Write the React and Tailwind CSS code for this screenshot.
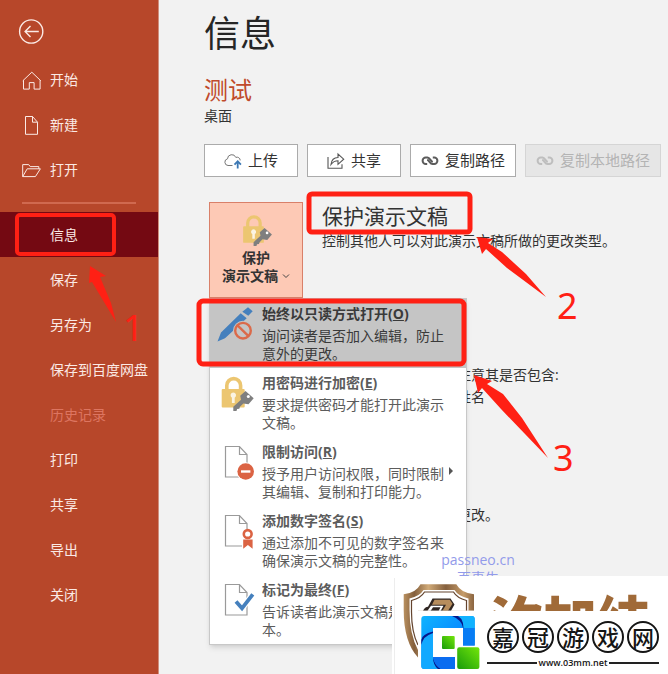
import React from 'react';
import clsx from 'clsx';

const topNav = [
  { label: '开始', icon: HomeIcon },
  { label: '新建', icon: NewIcon },
  { label: '打开', icon: OpenIcon },
];

const fileNav = [
  { label: '信息', active: true },
  { label: '保存' },
  { label: '另存为' },
  { label: '保存到百度网盘' },
  { label: '历史记录', disabled: true },
  { label: '打印' },
  { label: '共享' },
  { label: '导出' },
  { label: '关闭' },
];

const menuItems = [
  {
    title: '始终以只读方式打开',
    hotkey: 'O',
    lines: ['询问读者是否加入编辑，防止', '意外的更改。'],
    icon: ReadOnlyIcon,
    active: true,
  },
  {
    title: '用密码进行加密',
    hotkey: 'E',
    lines: ['要求提供密码才能打开此演示', '文稿。'],
    icon: LockIcon,
  },
  {
    title: '限制访问',
    hotkey: 'R',
    lines: ['授予用户访问权限，同时限制', '其编辑、复制和打印能力。'],
    icon: RestrictIcon,
    submenu: true,
  },
  {
    title: '添加数字签名',
    hotkey: 'S',
    lines: ['通过添加不可见的数字签名来', '确保演示文稿的完整性。'],
    icon: SignatureIcon,
  },
  {
    title: '标记为最终',
    hotkey: 'F',
    lines: ['告诉读者此演示文稿是最终版', '本。'],
    icon: FinalIcon,
  },
];

function HomeIcon() {
  return (
    <svg className="h-5 w-5" viewBox="0 0 20 20" fill="none" stroke="currentColor">
      <path d="M.8 10.8 9.8 2.2l9 8.6M1.5 10.2v8.9H7.3v-6.5h4.8v6.5h6V10.2" />
    </svg>
  );
}

function NewIcon() {
  return (
    <svg className="h-5 w-5" viewBox="0 0 20 20" fill="none" stroke="currentColor">
      <path d="M3.5 1.5h7l5 5.7v12.1h-12zM10.5 1.5v5.7h5" />
    </svg>
  );
}

function OpenIcon() {
  return (
    <svg className="h-5 w-5" viewBox="0 0 20 20" fill="none" stroke="currentColor">
      <path d="M.7 16.6V4.6h6l1.5 2h8.6v2.2M.7 16.6 5.2 8.8h13.2l-5 7.8z" />
    </svg>
  );
}

function CloudUpIcon() {
  return (
    <svg className="h-[18px] w-[18px]" viewBox="0 0 18 18" fill="none">
      <path d="M8.5 13.5H4a3.4 3.4 0 0 1-.5-6.7A4.3 4.3 0 0 1 11.8 5.4a3.2 3.2 0 0 1 4.4 3" stroke="#777" />
      <path d="M13.7 16.5V9.5M10.5 12.6l3.2-3.4 3.2 3.4" stroke="#3c78b4" strokeWidth="1.8" />
    </svg>
  );
}

function ShareIcon() {
  return (
    <svg className="h-[18px] w-[18px]" viewBox="0 0 18 18" fill="none" stroke="#555" strokeWidth="1.1">
      <path d="M1 5v11.3h14v-4" />
      <path d="M4 12.5c.5-4.500 3-7 7-7V2l5.700 5.200L11 12.300V8.800c-3 0-5 1-7 3.700z" />
    </svg>
  );
}

function ChainIcon() {
  return (
    <svg
      className="h-[18px] w-[18px]"
      viewBox="0 0 18 18"
      fill="none"
      stroke="currentColor"
      strokeOpacity=".8"
      strokeWidth="2"
    >
      <path d="M6.200 12H4.800a3.200 3.200 0 0 1 0-6.400h1.700c2.600 0 3 3.600 5.300 4.300" />
      <path d="M11.800 5.600h1.400a3.200 3.200 0 0 1 0 6.400h-1.700c-2.600 0-3-3.600-5.300-4.300" />
    </svg>
  );
}

function ReadOnlyIcon() {
  return (
    <svg className="h-[42px] w-10" viewBox="0 0 40 42">
      <path d="M1.5 40.5 5 31.5 24.7 12.3l6 5L9 37.3zM26.3 10.7 32 6.3l4.7 3.9-4.4 4.5z" fill="#4580bd" />
      <circle cx="27" cy="29.7" r="10" fill="#c5c5c5" />
      <circle cx="27" cy="29.7" r="7.8" fill="none" stroke="#db6a4a" strokeWidth="2.4" />
      <path d="m21.5 24.3 11 10.8" stroke="#db6a4a" strokeWidth="2.4" />
    </svg>
  );
}

function LockIcon({ className = 'h-[42px] w-10' }) {
  return (
    <svg className={className} viewBox="0 0 40 42">
      <path d="M10.8 20v-4.500a6.900 6.900 0 0 1 13.800 0V20" fill="none" stroke="#ecc671" strokeWidth="3.6" />
      <rect x="5.7" y="19" width="23" height="18.5" rx="1" fill="#ecc671" />
      <path d="M17.3 22.500a2.800 2.800 0 0 1 1.400 5.200V33h-2.800v-5.300a2.800 2.800 0 0 1 1.400-5.200z" fill="#fff" fillOpacity=".8" />
      <path d="m29.5 21 8.200 7.300-5.200 6-5.200-.8-3.300 3.300-.7 2-2.200.3-.6 1.800h-3.200v-4.200l7.700-7-.8-4z" fill="#7f7f7f" />
      <circle cx="32.3" cy="26.5" r="1.5" fill="#fff" />
    </svg>
  );
}

function PageOutline() {
  return (
    <path d="M9.5 7.5h14l7.5 8V38H9.500zM23.500 7.500v8H31" fill="#fff" stroke="#9a9a9a" strokeWidth="1.2" />
  );
}

function RestrictIcon() {
  return (
    <svg className="h-[42px] w-10" viewBox="0 0 40 42">
      <PageOutline />
      <circle cx="29.7" cy="32.5" r="9.3" fill="#fff" />
      <circle cx="29.7" cy="32.5" r="8.3" fill="#db6343" />
      <path d="M25 32.5h9.400" stroke="#fff" strokeWidth="2.4" />
    </svg>
  );
}

function SignatureIcon() {
  return (
    <svg className="h-[42px] w-10" viewBox="0 0 40 42">
      <PageOutline />
      <path d="M26 21h12v20H26z" fill="#fff" />
      <circle cx="31.7" cy="26" r="3.9" fill="none" stroke="#db6343" strokeWidth="2.6" />
      <path d="M27.2 31.500h9.400v9.200L31.900 37l-4.700 3.700z" fill="#db6343" />
    </svg>
  );
}

function FinalIcon() {
  return (
    <svg className="h-[42px] w-10" viewBox="0 0 40 42">
      <PageOutline />
      <path d="m20 24.5 6 6.800 10.800-14" fill="none" stroke="#fff" strokeWidth="6" />
      <path d="m20 24.5 6 6.800 10.800-14" fill="none" stroke="#4580bd" strokeWidth="3.8" />
    </svg>
  );
}

function Sidebar() {
  return (
    <aside className="w-[159px] shrink-0 border-r border-[#cf8f7d] bg-[#b7472a] pt-[19px] text-sm text-[#fbeae5]">
      <button type="button" aria-label="返回" className="ml-[18px] block h-[25px] w-[26px]">
        <svg className="h-[25px] w-[26px]" viewBox="0 0 26 25" fill="none" stroke="currentColor" strokeWidth="1.4">
          <circle cx="13.2" cy="12.5" r="11.6" />
          <path d="M20.8 12.5H7.300M12.500 7l-5.400 5.500 5.400 5.500" />
        </svg>
      </button>
      <nav className="mt-[13px]">
        {topNav.map(({ label, icon: Icon }) => (
          <button key={label} type="button" className="flex h-[45px] w-full items-center gap-2 pl-[22px]">
            <Icon />
            <span>{label}</span>
          </button>
        ))}
        <hr className="mx-[22px] mt-2.5 mb-2 border-t-2 border-[#d0694f]" />
        {fileNav.map((item) => (
          <button
            key={item.label}
            type="button"
            disabled={item.disabled}
            className={clsx(
              'flex h-[45px] w-full items-center pl-[50px] whitespace-nowrap',
              item.active && 'bg-[#740912]',
              item.disabled && 'text-[#dd7560]'
            )}
          >
            {item.label}
          </button>
        ))}
      </nav>
    </aside>
  );
}

function ActionButton({ icon: Icon, children, className, disabled }) {
  return (
    <button
      type="button"
      disabled={disabled}
      className={clsx(
        'flex h-[33px] shrink-0 items-center gap-1.5 border text-[15px] whitespace-nowrap',
        disabled ? 'border-[#d5d5d5] bg-[#e6e6e6] text-[#b4b4b4]' : 'border-[#ababab] bg-white text-[#333]',
        className
      )}
    >
      <Icon />
      {children}
    </button>
  );
}

function ProtectMenu() {
  return (
    <div role="menu" className="absolute top-full left-0 z-10 w-[258px] border border-[#c8c8c8] bg-white shadow-md">
      {menuItems.map(({ title, hotkey, lines, icon: Icon, active, submenu }) => (
        <button
          key={hotkey}
          type="button"
          role="menuitem"
          className={clsx(
            'relative flex h-[69px] w-full items-start gap-1.5 pl-1.5 text-left',
            active ? 'bg-[#c5c5c5] text-[#3a3a3a]' : 'text-[#5c5c5c]'
          )}
        >
          <span className="shrink-0 pt-0.5">
            <Icon />
          </span>
          <span className="block pt-[5px] text-sm whitespace-nowrap">
            <span className="block leading-5 font-bold">
              {title}(<u>{hotkey}</u>)
            </span>
            <span className="mt-[3px] block leading-[18px]">
              {lines[0]}
              <br />
              {lines[1]}
            </span>
          </span>
          {submenu && (
            <svg className="absolute top-[30px] right-[13px] h-2 w-1" viewBox="0 0 4 8">
              <path d="M0 0l4 4-4 4z" fill="#555" />
            </svg>
          )}
        </button>
      ))}
    </div>
  );
}

// Red boxes, arrows and step numbers drawn over the page
function Annotations() {
  return (
    <svg
      className="pointer-events-none absolute top-0 left-0 z-20 h-[674px] w-[668px]"
      viewBox="0 0 668 674"
      fill="#ff2014"
    >
      <g fill="none" stroke="#ff2014">
        <rect x="17" y="215" width="97" height="39" rx="3" strokeWidth="4" />
        <rect x="309" y="194" width="161" height="38" rx="3" strokeWidth="5" />
        <rect x="199" y="301" width="265" height="63" rx="4" strokeWidth="5" />
      </g>
      <path d="M90 266l16 10-6 1 11 26 5 19-24-40-3 1z" />
      <path d="M477 237l16 2-5 4 14 9 24 22 20 23-39-29-21-19-4 5z" />
      <path d="M474 375l18 6-5 3 16 10 19 24 26 40-47-49-19-21-4 5z" />
      <g className="font-['Noto_Sans']" fontSize="36">
        <text x="123" y="341">1</text>
        <text x="557" y="319">2</text>
        <text x="553" y="471">3</text>
      </g>
    </svg>
  );
}

function Watermark() {
  return (
    <div className="absolute top-[576px] right-0 z-30 h-[98px] w-[276px] bg-white text-[#151515]">
      <svg className="absolute inset-0 h-[98px] w-[276px]" viewBox="0 0 276 98">
        <defs>
          <linearGradient id="bronze" x1="0" x2="1">
            <stop offset="0" stopColor="#b9905f" />
            <stop offset=".15" stopColor="#845f3c" />
            <stop offset=".35" stopColor="#d0aa78" />
            <stop offset=".6" stopColor="#85603e" />
            <stop offset=".85" stopColor="#c69c69" />
            <stop offset="1" stopColor="#8b6541" />
          </linearGradient>
          <linearGradient id="blue" x1="0" y1="0" x2="1" y2="1">
            <stop offset="0" stopColor="#10b4ff" />
            <stop offset=".5" stopColor="#078cff" />
            <stop offset="1" stopColor="#0754d8" />
          </linearGradient>
          <linearGradient id="green" x1="0" y1="1" x2="1" y2="0">
            <stop offset="0" stopColor="#189b0c" />
            <stop offset="1" stopColor="#73e60a" />
          </linearGradient>
        </defs>
        <path d="M2.5 2v96" stroke="#ededed" />
        <path
          d="M11.7 18.3Q24 17 28.500 8.300H64.300Q69 17 82 18.300V34.700H26V81.500Q11.700 66 11.700 34z"
          fill="url(#bronze)"
        />
        <path d="M17.5 22.500Q28 20 31.500 14H62.500Q66 20 76.500 22.500V34.700H26V74Q17.500 58 17.500 34z" fill="#fff" />
        <path
          d="M26 69Q19.5 56 19.500 36V24.500Q29 22 32.500 16H61.500Q65 22 74.500 24.500V34.700"
          fill="none"
          stroke="#64442e"
          strokeWidth="1.2"
        />
        {/* emblem inside the shield */}
        <path d="M31 34.700q2-4 5-4l4.500-8.200H58.500l4 6-3.500 6.200z" fill="#302622" />
        <path d="M42.500 23.800h15.300l2.700 4-4.500 6.900h-5.500l3.500-6H40z" fill="#b78d5d" />
        <path d="M39 29.800h12.500l-2.800 4.900H35.500z" fill="#fff" />
        <path d="M41 31.300h7.500l-1.800 3.400h-8z" fill="#302622" />
        <path d="M26 34.700h250V98H26z" fill="#fff" />

        <rect x="29.3" y="40" width="53.4" height="53" rx="3" fill="url(#blue)" />
        <path d="M29.3 69Q31 60 41 57v24Q42 89 49 93H32.300a3 3 0 0 1-3-3z" fill="#12a9ff" />
        <path d="M60 40Q70 43 71 52v14h11.700V43a3 3 0 0 0-3-3z" fill="#11b2ff" />
        <path d="M60 40q10 4 11 12v6q2-14-5-18zM29.300 69Q31 60 41 57v-1.500Q30 58 29.300 64zM41 81q2 9 8 12h-3q-5-4-5-12z" fill="#06168b" />
        <path d="M41 52h30v29H41z" fill="#fff" />
        <rect x="50" y="60" width="12.7" height="13" rx="1" fill="url(#green)" />
        <path d="M63 69.500h27V95H63z" fill="#fff" />
        <path d="M49 81h14v12H49q-7-4-8-12z" fill="#0a6cf0" />
        <path d="M71 52h11.700v17.500H71z" fill="#087cf4" />
        <rect x="65.2" y="71.3" width="22.2" height="21.7" rx="2" fill="url(#green)" />
      </svg>
      <div className="absolute top-[18px] left-[97px] h-[17px] overflow-hidden text-[54px] leading-[54px] font-black text-[#a06a38]">
        汐加纬
      </div>
      <div className="absolute top-[45px] left-[95px] w-[172px]">
        <div className="flex justify-between">
          {['嘉', '冠', '游', '戏', '网'].map((ch) => (
            <span
              key={ch}
              className="flex h-8 w-8 items-center justify-center rounded-full border-2 border-[#151515] text-[22px] leading-none font-medium"
            >
              {ch}
            </span>
          ))}
        </div>
        <div className="mt-[3px] flex items-center gap-0.5 text-[9px] leading-[14px] font-semibold">
          <span className="h-0.5 flex-1 bg-[#222]" />
          www.03mm.net
          <span className="h-0.5 flex-1 bg-[#222]" />
        </div>
      </div>
    </div>
  );
}

const App = () => {
  return (
    <div className="relative flex min-h-screen overflow-hidden bg-[#f2f2f2] font-['Open_Sans','Noto_Sans_CJK_SC',sans-serif] text-[#333]">
      <Sidebar />

      <main className="min-w-0 flex-1 pt-2.5 pl-[45px]">
        <h1 className="text-[36px] leading-[48px] text-[#262626]">信息</h1>
        <h2 className="mt-4 text-2xl leading-8 text-[#c04a2b]">测试</h2>
        <p className="text-sm leading-5">桌面</p>

        <div className="mt-[18px] flex gap-[9px]">
          <ActionButton icon={CloudUpIcon} className="px-[19px]">上传</ActionButton>
          <ActionButton icon={ShareIcon} className="px-[19px]">共享</ActionButton>
          <ActionButton icon={ChainIcon} className="px-2.5">复制路径</ActionButton>
          <ActionButton icon={ChainIcon} className="px-2.5" disabled>复制本地路径</ActionButton>
        </div>

        <section className="mt-[25px] flex gap-[19px] pl-[5px]">
          <div className="relative shrink-0">
            <button
              type="button"
              aria-haspopup="menu"
              aria-expanded="true"
              className="flex h-24 w-[94px] flex-col items-center border border-[#d98069] bg-[#fdc9b5] pt-1.5 text-sm leading-[18px] font-bold"
            >
              <LockIcon className="mb-0.5 h-[38px] w-9" />
              <span>保护</span>
              <span className="flex items-center gap-1">
                演示文稿
                <svg className="h-1.5 w-2" viewBox="0 0 8 6" fill="none" stroke="#444">
                  <path d="M1 1.5l3 3 3-3" />
                </svg>
              </span>
            </button>
            <ProtectMenu />
          </div>
          <div className="whitespace-nowrap">
            <h3 className="text-[21px] leading-7">保护演示文稿</h3>
            <p className="text-sm leading-[22px]">控制其他人可以对此演示文稿所做的更改类型。</p>
          </div>
        </section>

        <section className="mt-[66px] pl-[253px] text-sm leading-[22px]">
          <p>注意其是否包含:</p>
          <p>姓名</p>
        </section>

        <section className="mt-24 pl-[253px] text-sm leading-[22px]">
          <p>更改。</p>
        </section>
      </main>

      <div className="absolute top-[551px] left-[438px] z-20 w-20 text-center text-sm leading-[18px] text-[#929bea]">
        <a href="#passneo">passneo.cn</a>
        <p>百事牛</p>
      </div>
      <Annotations />
      <Watermark />
    </div>
  );
};

export default App;
